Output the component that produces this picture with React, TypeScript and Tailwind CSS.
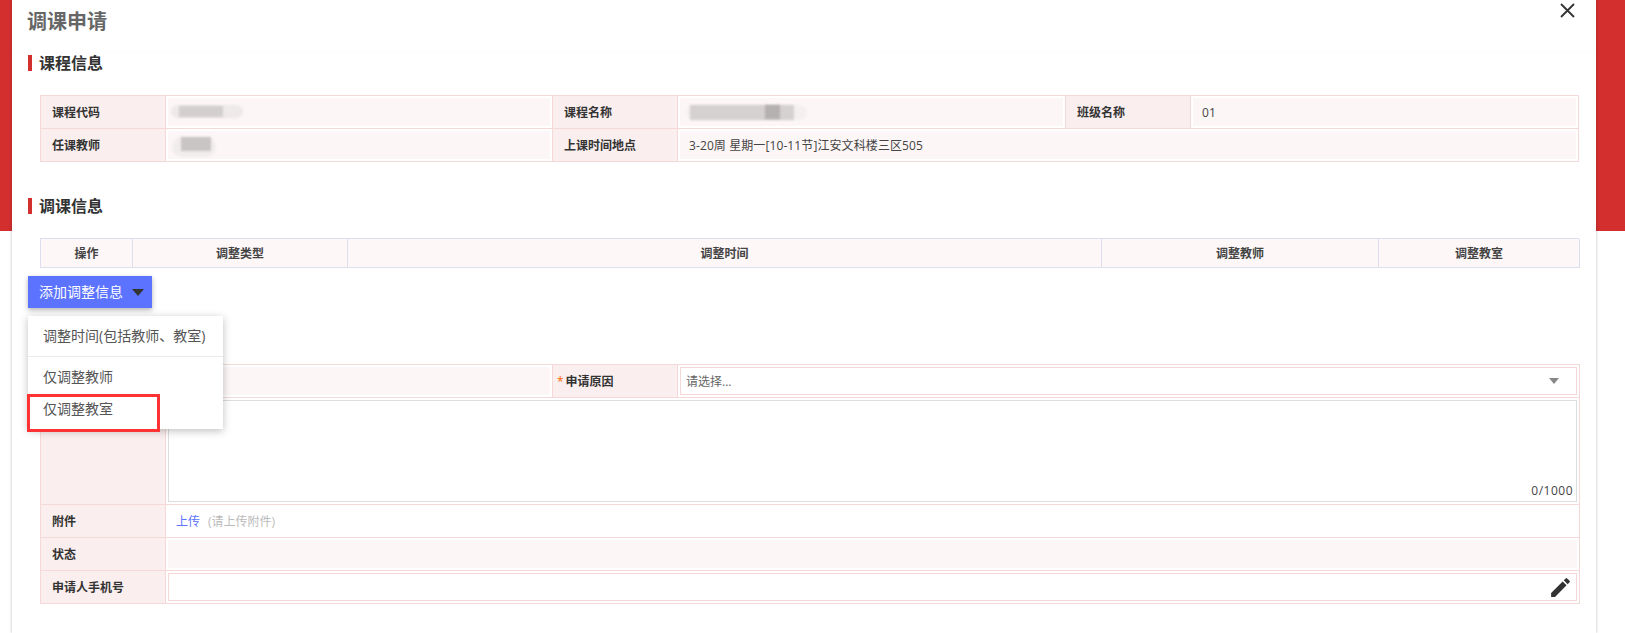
const font = "font-['Open_Sans','Noto_Sans_CJK_SC',sans-serif]";

const Label = ({ children, className = "" }: { children?: React.ReactNode; className?: string }) => (
  <div className={`flex items-center pl-[11px] pt-[2px] bg-[#faeeee] border-r border-b border-[#f5d8d8] text-[12px] font-bold text-[#333] ${className}`}>
    {children}
  </div>
);

// value cells have a white ring round a pale pink fill
const Value = ({ children, className = "" }: { children?: React.ReactNode; className?: string }) => (
  <div className={`bg-white p-[2px] border-r border-b border-[#f5d8d8] ${className}`}>
    <div className="relative flex items-center h-full pl-[9px] pt-[2px] bg-[#fdf6f6] text-[12px] tracking-[0.1px] text-[#444]">{children}</div>
  </div>
);

const Blur = ({ className }: { className: string }) => <div className={`absolute blur-[1px] ${className}`} />;

const SectionTitle = ({ title, className = "" }: { title: string; className?: string }) => (
  <div className={`flex items-center gap-[7px] h-[16px] ${className}`}>
    <span className="w-[4px] h-[16px] bg-[#d32f2f]" />
    <span className="text-[16px] leading-[16px] font-bold text-[#333]">{title}</span>
  </div>
);

const CourseTable = () => (
  <div className="ml-[12px] w-[1539px] mt-[24px] grid grid-cols-[125px_387px_125px_388px_125px_388px] grid-rows-[33px_33px] border-t border-l border-[#f5d8d8]">
    <Label>课程代码</Label>
    <Value>
      <Blur className="left-[3px] top-[7px] w-[72px] h-[13px] rounded-full bg-[#eeeaea]" />
      <Blur className="left-[11px] top-[8px] w-[44px] h-[11px] bg-[#d3cfce]" />
    </Value>
    <Label>课程名称</Label>
    <Value>
      <Blur className="left-[7px] top-[7px] w-[120px] h-[15px] rounded-full bg-[#f3f0ef]" />
      <Blur className="left-[10px] top-[7px] w-[104px] h-[15px] bg-[#d5d1d0]" />
      <Blur className="left-[85px] top-[7px] w-[15px] h-[14px] bg-[#b5b1b0]" />
    </Value>
    <Label>班级名称</Label>
    <Value>01</Value>
    <Label>任课教师</Label>
    <Value>
      <Blur className="left-[4px] top-[6px] w-[44px] h-[20px] rounded-full bg-[#f1eded]" />
      <Blur className="left-[13px] top-[6px] w-[30px] h-[14px] bg-[#c9c5c4]" />
    </Value>
    <Label>上课时间地点</Label>
    <Value className="col-span-3">3-20周 星期一[10-11节]江安文科楼三区505</Value>
  </div>
);

const AdjustTable = () => (
  <div className="ml-[12px] w-[1539px] mt-[24px] grid grid-cols-[92px_215px_754px_277px_201px] h-[30px] border-t border-l border-[#dcdff0]">
    {["操作", "调整类型", "调整时间", "调整教师", "调整教室"].map((h) => (
      <div key={h} className="flex items-center justify-center pt-[1px] bg-[#fdf7f7] border-r border-b border-[#dcdff0] text-[12px] font-bold text-[#444]">
        {h}
      </div>
    ))}
  </div>
);

const AddMenu = () => (
  <div className="absolute left-0 top-[40px] w-[195px] h-[113px] bg-white shadow-[0_2px_8px_rgba(0,0,0,0.25)] text-[14px] leading-[20px] text-[#555]">
    <div className="flex items-center h-[41px] pl-[15px] border-b border-[#eaeaea]">调整时间(包括教师、教室)</div>
    <div className="flex items-center h-[39px] pl-[15px]">仅调整教师</div>
    <div className="flex items-center h-[26px] pl-[15px]">仅调整教室</div>
  </div>
);

const ApplyForm = () => (
  <div className="ml-[12px] w-[1540px] mt-[88px] grid grid-cols-[125px_387px_125px_902px] grid-rows-[33px_107px_33px_33px_33px] border-t border-l border-[#f5d8d8]">
    <Label />
    <Value />
    <Label className="!pl-[4px]">
      <span className="text-[#f60] font-normal mr-[2px]">*</span>申请原因
    </Label>
    <div className="bg-white p-[2px] border-r border-b border-[#f5d8d8]">
      <div className="flex items-center justify-between h-full pl-[5px] pr-[17px] border border-[#f5d8d8] text-[12px] text-[#666]">
        <span className="pt-[2px]">请选择...</span>
        <span className="w-0 h-0 border-x-[5px] border-x-transparent border-t-[6px] border-t-[#888]" />
      </div>
    </div>

    <Label />
    <div className="col-span-3 bg-white p-[2px] border-r border-b border-[#f5d8d8]">
      <div className="flex items-end justify-end h-full pr-[3px] pb-[1px] border border-[#ddd] text-[12px] tracking-[0.5px] text-[#444]">0/1000</div>
    </div>

    <Label>附件</Label>
    <div className="col-span-3 flex items-center pl-[10px] pt-[2px] gap-[8px] bg-white border-r border-b border-[#f5d8d8] text-[12px]">
      <span className="text-[#5b73ff]">上传</span>
      <span className="text-[#bbb]">(请上传附件)</span>
    </div>

    <Label>状态</Label>
    <Value className="col-span-3" />

    <Label>申请人手机号</Label>
    <div className="col-span-3 bg-white p-[2px] border-r border-b border-[#f5d8d8]">
      <div className="flex items-center justify-end h-full pr-[3px] border border-[#f5d8d8]">
        <svg width="25" height="25" viewBox="0 0 24 24" fill="#333">
          <path d="M3 17.25V21h3.75L17.81 9.94l-3.75-3.75L3 17.25zM20.71 7.04a1 1 0 0 0 0-1.41l-2.34-2.34a1 1 0 0 0-1.41 0l-1.83 1.83 3.75 3.75 1.83-1.83z" />
        </svg>
      </div>
    </div>
  </div>
);

export default function App() {
  return (
    <div className={`flex items-start w-full h-[633px] overflow-hidden bg-white ${font}`}>
      <div className="w-[12px] h-[231px] shrink-0 bg-[#d32f2f]" />
      <div className="relative w-[1584px] h-[633px] shrink-0 bg-white shadow-[0_0_3px_rgba(0,0,0,0.25)]">
        <div className="flex items-center justify-between h-[53px] pl-[15px] pr-[21px] pb-[8px] border-b border-[#fcfcfc]">
          <h1 className="text-[20px] leading-[28px] font-bold text-[#666]">调课申请</h1>
          <svg className="mb-[24px]" width="15" height="15" viewBox="0 0 15 15" stroke="#333" strokeWidth="1.8" fill="none">
            <path d="M1 1l13 13M14 1L1 14" />
          </svg>
        </div>

        <div className="pl-[16px]">
          <SectionTitle title="课程信息" className="mt-[2px]" />
          <CourseTable />
          <SectionTitle title="调课信息" className="mt-[36px]" />
          <AdjustTable />
          <div className="relative mt-[8px] h-0">
            <button className="flex items-center gap-[9px] w-[124px] h-[32px] pl-[11px] pb-[2px] bg-[#5b73ff] text-[14px] text-white shadow-[0_2px_5px_rgba(0,0,0,0.3)]">
              添加调整信息
              <span className="w-0 h-0 mt-[2px] border-x-[6px] border-x-transparent border-t-[7px] border-t-[#333]" />
            </button>
          </div>
          <ApplyForm />
          <div className="absolute left-[16px] top-[276px] w-[195px]">
            <AddMenu />
          </div>
          <div className="absolute left-[15px] top-[394px] w-[133px] h-[38px] border-[3px] border-[#f33]" />
        </div>
      </div>
      <div className="flex-1 h-[231px] bg-[#d32f2f]" />
    </div>
  );
}
